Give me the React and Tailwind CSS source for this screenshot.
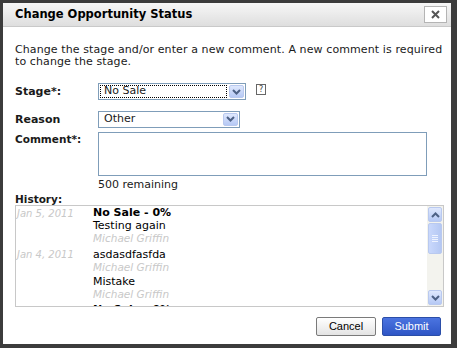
import React from 'react';

const Chevron = ({ className = '' }) => (
  <svg width="9" height="6" viewBox="0 0 9 6" className={className}>
    <path d="M1 1 L4.5 4.5 L8 1" fill="none" stroke="#4d6185" strokeWidth="2" />
  </svg>
);

const Select = ({ value, width, focused }) => (
  <div className={`flex h-[17px] border border-[#7f9db9] bg-white ${width}`}>
    <div className="flex flex-1 items-center p-[1px]">
      <div
        className={`flex h-full flex-1 items-center pl-[3px] text-[11px] ${
          focused ? 'border border-dotted border-black' : 'border border-transparent'
        }`}
      >
        {value}
      </div>
    </div>
    <div className="m-[1px] flex w-[15px] items-center justify-center rounded-[2px] border border-[#b9c9ef] bg-gradient-to-b from-[#dfe8fd] to-[#b6c9f5]">
      <Chevron />
    </div>
  </div>
);

const history = [
  {
    date: 'Jan 5, 2011',
    items: [{ title: 'No Sale - 0%', text: 'Testing again', by: 'Michael Griffin' }],
  },
  {
    date: 'Jan 4, 2011',
    items: [
      { text: 'asdasdfasfda', by: 'Michael Griffin' },
      { text: 'Mistake', by: 'Michael Griffin' },
    ],
  },
  {
    date: 'Jan 3, 2011',
    items: [{ title: 'No Sale - 0%', text: 'Hmm', by: 'Michael Griffin' }],
  },
];

export default function App() {
  return (
    <div className="h-[348px] w-[457px] bg-[#3c3c3c] p-[3px] pr-[6px] pb-[4px] font-['DejaVu_Sans',Verdana,sans-serif] text-[#1a1a1a]">
      <div className="flex h-full flex-col bg-white">
        {/* Title bar */}
        <div className="flex h-[24px] shrink-0 items-center justify-between border-b border-[#c9c9c9] bg-gradient-to-b from-[#f7f7f7] to-[#dedede] pl-[12px] pr-[4px]">
          <span className="text-[11.5px] font-bold text-black">Change Opportunity Status</span>
          <div className="flex h-[17px] w-[23px] items-center justify-center border border-[#b4b4b4] bg-white">
            <svg width="9" height="9" viewBox="0 0 9 9">
              <path d="M1 1 L8 8 M8 1 L1 8" stroke="#555" strokeWidth="2" />
            </svg>
          </div>
        </div>

        {/* Body */}
        <div className="flex flex-1 flex-col pl-[12px] pr-[8px] pt-[17px]">
          <p className="text-[11px] leading-[12px] tracking-[0.1px]">
            Change the stage and/or enter a new comment. A new comment is required to change the stage.
          </p>

          <div className="mt-[15px] flex items-start">
            <div className="w-[83px] pt-[1px] text-[11px] font-bold">Stage*:</div>
            <Select value="No Sale" width="w-[148px]" focused />
            <div className="ml-[10px] mt-[1px] flex h-[11px] w-[10px] items-center justify-center border border-[#666] text-[8px] leading-none text-[#444]">
              ?
            </div>
          </div>

          <div className="mt-[10px] flex items-start">
            <div className="w-[83px] pt-[1px] text-[11px] font-bold">Reason</div>
            <Select value="Other" width="w-[142px]" />
          </div>

          <div className="mt-[4px] flex items-start">
            <div className="w-[83px] text-[10.5px] font-bold">Comment*:</div>
            <div className="flex flex-col">
              <div className="h-[44px] w-[329px] border border-[#7f9db9] bg-white" />
              <div className="mt-[2px] text-[11px] leading-[13px]">500 remaining</div>
            </div>
          </div>

          <div className="mt-[2px] text-[10.5px] font-bold leading-[12px]">History:</div>
          <div className="flex h-[102px] w-[429px] border border-[#c8c8c8]">
            <div className="flex-1 overflow-hidden pt-[1px]">
              {history.map((h) => (
                <div key={h.date} className="mb-[4px] flex">
                  <div className="w-[77px] pl-[1px] pt-[1px] text-[10px] italic leading-[12px] text-[#c8c8c8]">
                    {h.date}
                  </div>
                  <div className="flex flex-col">
                    {h.items.map((it, i) => (
                      <div key={i} className={i > 0 ? 'mt-[2px]' : ''}>
                        {it.title && (
                          <div className="text-[11px] font-bold leading-[12px] text-black">{it.title}</div>
                        )}
                        <div className="text-[11px] leading-[13px] text-black">{it.text}</div>
                        <div className="text-[10.5px] italic leading-[12px] text-[#c8c8c8]">{it.by}</div>
                      </div>
                    ))}
                  </div>
                </div>
              ))}
            </div>
            {/* Scrollbar */}
            <div className="flex w-[16px] flex-col bg-[#f3f3ee] p-[1px]">
              <div className="flex h-[15px] items-center justify-center rounded-[2px] border border-[#b9c9ef] bg-gradient-to-b from-[#dfe8fd] to-[#b6c9f5]">
                <Chevron className="rotate-180" />
              </div>
              <div className="mt-[1px] flex h-[31px] flex-col items-center justify-center gap-[1px] rounded-[2px] border border-[#b9c9ef] bg-gradient-to-r from-[#c9d8fc] to-[#b5c8f3]">
                <div className="h-px w-[6px] bg-[#eef3ff]" />
                <div className="h-px w-[6px] bg-[#eef3ff]" />
                <div className="h-px w-[6px] bg-[#eef3ff]" />
                <div className="h-px w-[6px] bg-[#eef3ff]" />
              </div>
              <div className="flex-1" />
              <div className="flex h-[15px] items-center justify-center rounded-[2px] border border-[#b9c9ef] bg-gradient-to-b from-[#dfe8fd] to-[#b6c9f5]">
                <Chevron />
              </div>
            </div>
          </div>

          <div className="mt-[10px] flex justify-end gap-[6px] pr-[2px] font-['Liberation_Sans',Arial,sans-serif]">
            <div className="flex h-[19px] w-[60px] items-center justify-center rounded-[2px] border border-[#7a7a7a] bg-gradient-to-b from-white to-[#e4e4e4] text-[11px] text-black">
              Cancel
            </div>
            <div className="flex h-[19px] w-[59px] items-center justify-center rounded-[2px] border border-[#2b4ea8] bg-gradient-to-b from-[#4b74e0] to-[#2f56c6] text-[11px] text-white">
              Submit
            </div>
          </div>
        </div>
      </div>
    </div>
  );
}
